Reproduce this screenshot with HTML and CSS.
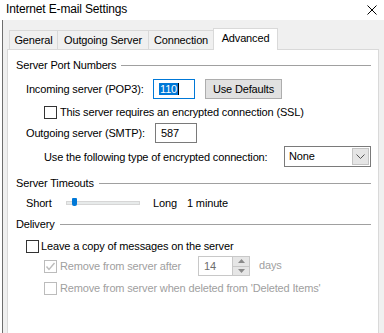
FILE: index.html
```html
<!DOCTYPE html>
<html>
<head>
<meta charset="utf-8">
<link rel="stylesheet" href="styles.css">
</head>
<body>
<div class="window">
  <div class="titlebar">
    <span class="title">Internet E-mail Settings</span>
    <svg class="close" width="10" height="10" viewBox="0 0 10 10"><path d="M0.5 0.5 L9.5 9.5 M9.5 0.5 L0.5 9.5" stroke="#000" stroke-width="1" fill="none"/></svg>
  </div>
  <div class="content">
    <div class="strip"></div>
    <div class="main">
      <div class="tabs">
        <div class="tab t-general">General</div>
        <div class="tab t-outgoing">Outgoing Server</div>
        <div class="tab t-connection">Connection</div>
        <div class="tab active">Advanced</div>
      </div>
      <div class="panel">
        <div class="group g1"><span>Server Port Numbers</span><i class="line"></i></div>
        <div class="row r-in">
          <span class="label lw">Incoming server (POP3):</span>
          <div class="field focus"><span class="sel">110</span><i class="caret"></i></div>
          <div class="button">Use Defaults</div>
        </div>
        <div class="row r-ssl">
          <span class="cb"></span><span class="label">This server requires an encrypted connection (SSL)</span>
        </div>
        <div class="row r-out">
          <span class="label lw2">Outgoing server (SMTP):</span>
          <div class="field"><span>587</span></div>
        </div>
        <div class="row r-enc">
          <span class="label lw3">Use the following type of encrypted connection:</span>
          <div class="select"><span>None</span><div class="dd"><svg width="9" height="5" viewBox="0 0 9 5"><path d="M0.5 0.5 L4.5 4.5 L8.5 0.5" stroke="#555" fill="none"/></svg></div></div>
        </div>
        <div class="group g2"><span>Server Timeouts</span><i class="line"></i></div>
        <div class="row r-slide">
          <span class="label lshort">Short</span>
          <div class="track"><i class="thumb"></i></div>
          <span class="label llong">Long</span>
          <span class="label">1 minute</span>
        </div>
        <div class="group g3"><span>Delivery</span><i class="line"></i></div>
        <div class="row r-leave">
          <span class="cb"></span><span class="label">Leave a copy of messages on the server</span>
        </div>
        <div class="row r-after">
          <span class="cb dis"><svg width="11" height="11" viewBox="0 0 11 11"><path d="M1.5 5.5 L4 8.5 L9.5 2" stroke="#bcbcbc" stroke-width="1.4" fill="none"/></svg></span>
          <span class="label gray lafter">Remove from server after</span>
          <div class="spin"><span>14</span><div class="arrows"><div class="up"><svg width="7" height="4" viewBox="0 0 7 4"><path d="M0 4 L3.5 0 L7 4 Z" fill="#8a8a8a"/></svg></div><div class="down"><svg width="7" height="4" viewBox="0 0 7 4"><path d="M0 0 L3.5 4 L7 0 Z" fill="#8a8a8a"/></svg></div></div></div>
          <span class="label gray ldays">days</span>
        </div>
        <div class="row r-when">
          <span class="cb dis"></span><span class="label gray">Remove from server when deleted from 'Deleted Items'</span>
        </div>
      </div>
    </div>
  </div>
</div>
</body>
</html>
```

FILE: styles.css
```css
* { box-sizing: border-box; }
html, body { margin: 0; padding: 0; }
body {
  width: 384px;
  height: 333px;
  overflow: hidden;
  background: #f0f0f0;
  font-family: "Liberation Sans", Arial, sans-serif;
  font-size: 11px;
  letter-spacing: -0.15px;
  color: #000;
}
.window { width: 384px; height: 333px; display: flex; flex-direction: column; }
.titlebar {
  height: 20px;
  background: #fff;
  display: flex;
  align-items: center;
  justify-content: space-between;
  padding: 0 7px 2px 6px;
  flex: none;
}
.title { font-size: 12px; }
.close { margin-top: 1px; }
.content { flex: 1; display: flex; min-height: 0; }
.strip { width: 3px; background: #fff; border-right: 1px solid #6e6e6e; flex: none; }
.main { flex: 1; padding-left: 4px; padding-right: 5px; display: flex; flex-direction: column; min-width: 0; }
.tabs { display: flex; margin-top: 8px; height: 21px; align-items: flex-end; padding-left: 2px; position: relative; z-index: 1; }
.tab {
  height: 19px;
  border: 1px solid #d9d9d9;
  border-bottom: none;
  background: #f0f0f0;
  display: flex;
  align-items: center;
  justify-content: center;
  padding-bottom: 1px;
  margin-right: -1px;
}
.t-general { width: 49px; }
.t-outgoing { width: 92px; }
.t-connection { width: 66px; }
.tab.active {
  width: 65px;
  height: 22px;
  background: #fff;
  margin-bottom: -1px;
  padding-bottom: 3px;
  margin-left: 0;
}
.panel {
  flex: 1;
  background: #fff;
  border: 1px solid #d9d9d9;
  border-bottom: none;
  padding: 0 7px 0 8px;
  display: flex;
  flex-direction: column;
}
.group { display: flex; align-items: center; height: 14px; }
.group .line { flex: 1; height: 1px; background: #a0a0a0; margin-left: 5px; }
.g1 { margin-top: 8px; }
.g2 { margin-top: 9px; }
.g3 { margin-top: 7px; }
.row { display: flex; align-items: center; }
.label { white-space: nowrap; }
.gray { color: #a0a0a0; }
.r-in { height: 20px; margin-top: 7px; padding-left: 10px; }
.lw { width: 127px; }
.field {
  width: 42px;
  height: 20px;
  border: 1px solid #7a7a7a;
  display: flex;
  align-items: center;
  padding-left: 5px;
}
.field.focus { border-color: #0078d7; padding-left: 5px; }
.sel { background: #0078d7; color: #fff; height: 12px; line-height: 12px; padding: 0 1px; }
.caret { width: 1px; height: 12px; background: #000; }
.button {
  width: 77px;
  height: 20px;
  margin-left: 10px;
  background: #e1e1e1;
  border: 1px solid #adadad;
  display: flex;
  align-items: center;
  justify-content: center;
}
.r-ssl { height: 14px; margin-top: 6px; padding-left: 28px; }
.cb { width: 13px; height: 13px; border: 1px solid #333; background: #fff; margin-right: 3px; flex: none; display: flex; align-items: center; justify-content: center; }
.cb.dis { border-color: #bcbcbc; }
.r-out { height: 20px; margin-top: 4px; padding-left: 10px; }
.lw2 { width: 129px; }
.r-enc { height: 21px; margin-top: 3px; padding-left: 28px; }
.lw3 { width: 240px; }
.select {
  width: 87px;
  height: 21px;
  border: 1px solid #7a7a7a;
  display: flex;
  align-items: center;
  justify-content: space-between;
  padding: 1px 1px 1px 4px;
}
.select span { margin-top: -2px; }
.dd {
  width: 17px;
  height: 17px;
  background: #e5e5e5;
  border: 1px solid #c4c4c4;
  display: flex;
  align-items: center;
  justify-content: center;
}
.r-slide { height: 14px; margin-top: 6px; padding-left: 10px; }
.lshort { width: 40px; }
.track {
  width: 74px;
  height: 4px;
  background: #e7eaea;
  border: 1px solid #d6d6d6;
  position: relative;
}
.thumb {
  position: absolute;
  left: 5px;
  top: -4px;
  width: 5px;
  height: 8px;
  background: #0078d7;
  border-radius: 1px 1px 2px 2px;
}
.llong { margin-left: 13px; width: 34px; }
.r-leave { height: 14px; margin-top: 8px; padding-left: 10px; }
.r-leave .cb { margin-right: 2px; }
.r-after { height: 20px; margin-top: 3px; padding-left: 28px; }
.lafter { width: 138px; }
.spin {
  width: 52px;
  height: 20px;
  border: 1px solid #c8c8c8;
  display: flex;
  align-items: center;
  justify-content: space-between;
  padding-left: 5px;
  color: #6d6d6d;
}
.arrows { width: 17px; height: 18px; display: flex; flex-direction: column; border-left: 1px solid #c8c8c8; }
.arrows div { flex: 1; background: #e6e6e6; display: flex; align-items: center; justify-content: center; }
.arrows .up { border-bottom: 1px solid #c8c8c8; }
.ldays { margin-left: 9px; margin-top: -3px; }
.r-when { height: 14px; margin-top: 5px; padding-left: 28px; }
```
